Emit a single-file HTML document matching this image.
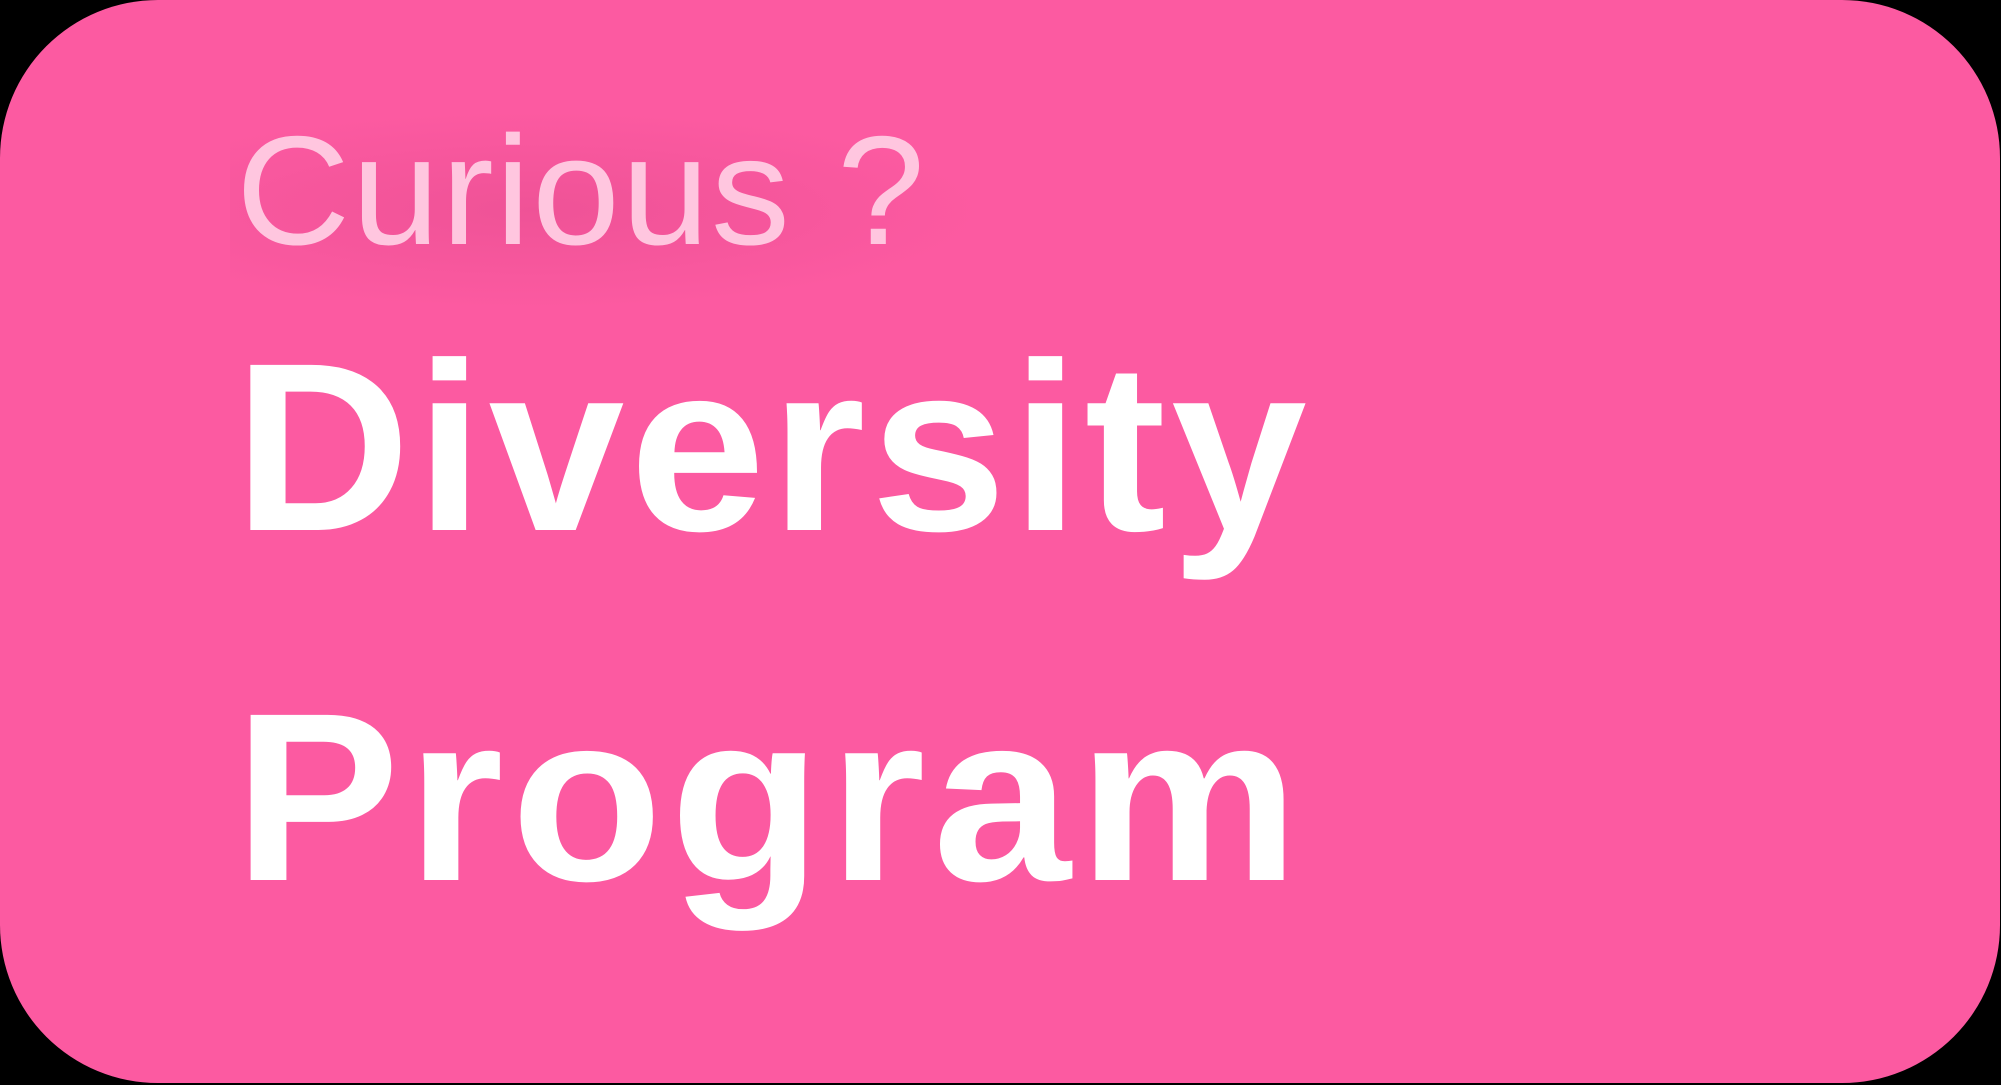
<!DOCTYPE html>
<html><head><meta charset="utf-8"><style>
html,body{margin:0;padding:0;background:#000;width:2001px;height:1085px;overflow:hidden}
.card{position:absolute;left:0;top:0;width:2000px;height:1083px;border-radius:158px;background:#FC5AA1;overflow:hidden}
.glow{position:absolute;left:230px;top:110px;width:760px;height:200px;background:radial-gradient(ellipse at 40% 50%,rgba(200,60,120,0.25),rgba(200,60,120,0) 70%)}
.t{position:absolute;font-family:"Liberation Sans",sans-serif;line-height:1;white-space:nowrap;transform-origin:0 0}
.c{left:236px;top:113px;font-size:155px;color:#FFC6DF;letter-spacing:1.5px;transform:scaleX(1.02)}
.d{left:234px;top:327px;font-size:240px;font-weight:bold;color:#fff;letter-spacing:5px;transform:scaleX(1.018)}
.p{left:234px;top:677px;font-size:240px;font-weight:bold;color:#fff;letter-spacing:7px;transform:scaleX(1.035)}
</style></head><body>
<div class="card">
<div class="glow"></div>
<div class="t c">Curious ?</div>
<div class="t d">Diversity</div>
<div class="t p">Program</div>
</div>
</body></html>
